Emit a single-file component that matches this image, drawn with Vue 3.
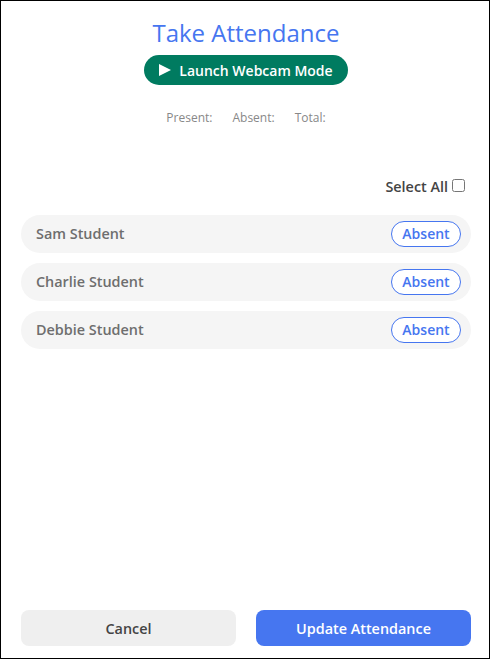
<template>
  <div class="modal">
    <header class="head">
      <h1 class="title">Take Attendance</h1>
      <button type="button" class="webcam">
        <svg class="play" viewBox="0 0 12 12" width="12" height="12" aria-hidden="true">
          <path d="M0 0 L12 6 L0 12 Z" fill="#fff" />
        </svg>
        Launch Webcam Mode
      </button>
      <div class="stats">
        <span>Present:</span>
        <span>Absent:</span>
        <span>Total:</span>
      </div>
    </header>

    <label class="select-all">
      Select All
      <input v-model="allSelected" type="checkbox" class="check" />
    </label>

    <ul class="students">
      <li v-for="student in students" :key="student" class="student">
        <span class="name">{{ student }}</span>
        <button type="button" class="status">Absent</button>
      </li>
    </ul>

    <footer class="actions">
      <button type="button" class="btn cancel">Cancel</button>
      <button type="button" class="btn update">Update Attendance</button>
    </footer>
  </div>
</template>

<script setup>
import { ref } from 'vue'

const allSelected = ref(false)
const students = ['Sam Student', 'Charlie Student', 'Debbie Student']
</script>

<style scoped>
.modal {
  box-sizing: border-box;
  width: 490px;
  height: 659px;
  padding: 0 18px 12px 20px;
  display: flex;
  flex-direction: column;
  border: 1px solid #000;
  background: #fff;
  font-family: "Open Sans", "Liberation Sans", sans-serif;
}
.head {
  display: flex;
  flex-direction: column;
  align-items: center;
  padding-top: 15px;
}
.title {
  margin: 0;
  font-size: 24px;
  line-height: 33px;
  font-weight: 400;
  color: #4676f0;
}
.webcam {
  display: flex;
  align-items: center;
  gap: 8px;
  height: 30px;
  margin-top: 6px;
  padding: 0 15px;
  border: none;
  border-radius: 15px;
  background: #007b60;
  color: #fff;
  font: 600 14px "Open Sans", sans-serif;
}
.stats {
  display: flex;
  gap: 20px;
  margin-top: 25px;
  font-size: 12px;
  line-height: 16px;
  color: #888;
}
.select-all {
  display: flex;
  align-items: center;
  justify-content: flex-end;
  gap: 4px;
  margin-top: 52px;
  margin-right: 6px;
  font-size: 14.4px;
  line-height: 18px;
  font-weight: 600;
  color: #444;
}
.check {
  width: 13px;
  height: 13px;
  margin: 0 0 3px;
}
.students {
  flex: 1;
  list-style: none;
  margin: 19px 0 0;
  padding: 0;
  display: flex;
  flex-direction: column;
  gap: 10px;
}
.student {
  display: flex;
  align-items: center;
  justify-content: space-between;
  height: 38px;
  padding: 0 10px 0 15px;
  border-radius: 19px;
  background: #f5f5f5;
}
.name {
  padding-bottom: 2px;
  font-size: 14.4px;
  font-weight: 600;
  color: #6e6e6e;
}
.status {
  box-sizing: border-box;
  width: 70px;
  height: 26px;
  padding: 0 0 2px;
  border: 1px solid #4676f0;
  border-radius: 13px;
  background: #fff;
  color: #4676f0;
  font: 600 14px "Open Sans", sans-serif;
}
.actions {
  display: flex;
  gap: 20px;
}
.btn {
  flex: 1;
  height: 36px;
  border: none;
  border-radius: 8px;
  font: 600 14.4px "Open Sans", sans-serif;
}
.cancel {
  background: #efefef;
  color: #444;
}
.update {
  background: #4676f0;
  color: #fff;
}
</style>
